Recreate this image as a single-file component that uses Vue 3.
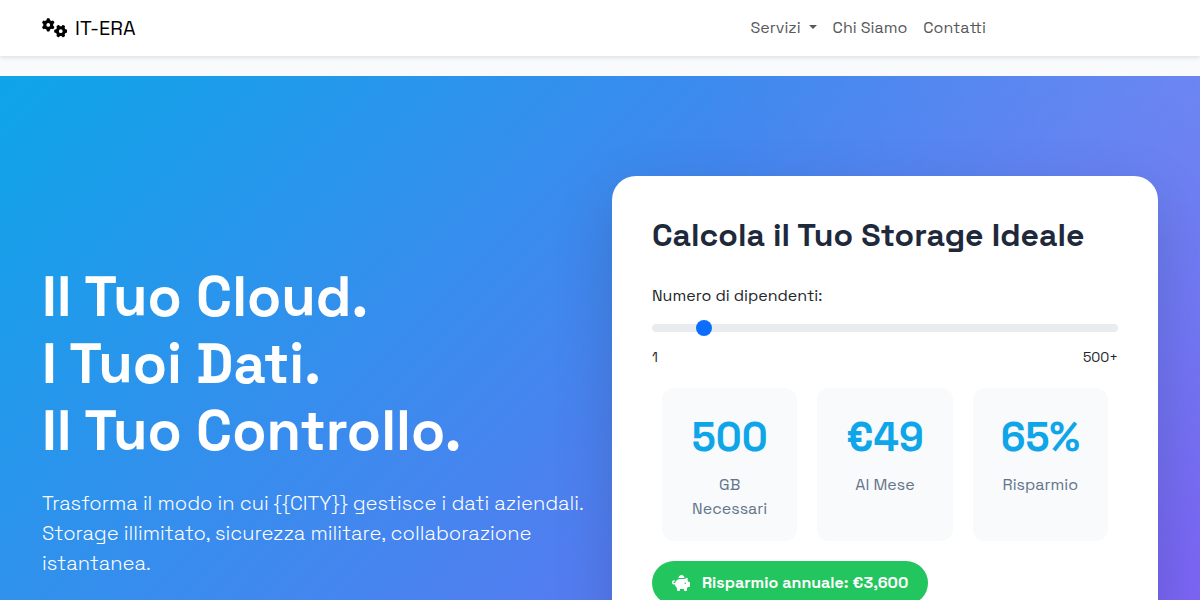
<script setup>
import { ref } from 'vue'

const employees = ref(50)
const city = '{{CITY}}'
const stats = [
  { value: '500', label: 'GB Necessari' },
  { value: '€49', label: 'Al Mese' },
  { value: '65%', label: 'Risparmio' }
]
const gear = 'M308.5 135.3c7.1-6.3 9.9-16.2 6.2-25c-2.3-5.3-4.8-10.5-7.6-15.5L304 89.4c-3-5-6.3-9.9-9.8-14.6c-5.7-7.6-15.7-10.1-24.7-7.1l-28.2 9.3c-10.7-8.8-23-16-36.2-20.9L199 27.1c-1.9-9.3-9.1-16.7-18.5-17.8C173.9 8.4 167.2 8 160.4 8h-.7c-6.8 0-13.5 .4-20.1 1.2c-9.4 1.1-16.6 8.6-18.5 17.8L115 56.1c-13.3 5-25.5 12.1-36.2 20.9L50.5 67.8c-9-3-19-.5-24.7 7.1c-3.5 4.7-6.8 9.6-9.9 14.6l-3 5.3c-2.8 5-5.3 10.2-7.6 15.6c-3.7 8.7-.9 18.6 6.2 25l22.2 19.8C32.6 161.9 32 168.9 32 176s.6 14.1 1.7 20.9L11.5 216.7c-7.1 6.3-9.9 16.2-6.2 25c2.3 5.3 4.8 10.5 7.6 15.6l3 5.2c3 5.1 6.3 9.9 9.9 14.6c5.7 7.6 15.7 10.1 24.7 7.1l28.2-9.3c10.7 8.8 23 16 36.2 20.9l6.1 29.1c1.9 9.3 9.1 16.7 18.5 17.8c6.7 .8 13.5 1.2 20.4 1.2s13.7-.4 20.4-1.2c9.4-1.1 16.6-8.6 18.5-17.8l6.1-29.1c13.3-5 25.5-12.1 36.2-20.9l28.2 9.3c9 3 19 .5 24.7-7.1c3.5-4.7 6.8-9.5 9.8-14.6l3.1-5.4c2.8-5 5.3-10.2 7.6-15.5c3.7-8.7 .9-18.6-6.2-25l-22.2-19.8c1.1-6.8 1.7-13.8 1.7-20.9s-.6-14.1-1.7-20.9l22.2-19.8zM112 176a48 48 0 1 1 96 0 48 48 0 1 1-96 0z'
</script>

<template>
  <div class="page">
    <header class="navbar">
      <div class="container bar">
        <a class="brand" href="#">
          <svg class="gears" viewBox="0 0 640 512" aria-hidden="true">
            <path :d="gear" />
            <path :d="gear" transform="translate(480 336) rotate(90) translate(-160 -176)" />
          </svg>
          <span>IT-ERA</span>
        </a>
        <nav class="links">
          <a class="dropdown" href="#servizi">Servizi</a>
          <a href="#chi-siamo">Chi Siamo</a>
          <a href="#contatti">Contatti</a>
        </nav>
      </div>
    </header>

    <main class="hero">
      <div class="container columns">
        <section class="intro">
          <h1>Il Tuo Cloud.<br>I Tuoi Dati.<br>Il Tuo Controllo.</h1>
          <p>Trasforma il modo in cui {{ city }} gestisce i dati aziendali. Storage illimitato, sicurezza militare, collaborazione istantanea.</p>
        </section>

        <section class="card">
          <h2>Calcola il Tuo Storage Ideale</h2>
          <label for="employees">Numero di dipendenti:</label>
          <input id="employees" v-model.number="employees" class="range" type="range" min="1" max="500">
          <div class="limits"><span>1</span><span>500+</span></div>
          <div class="stats">
            <div v-for="s in stats" :key="s.label" class="stat">
              <div class="value">{{ s.value }}</div>
              <div class="caption">{{ s.label }}</div>
            </div>
          </div>
          <div class="badge">
            <svg class="piggy" viewBox="0 0 576 512" aria-hidden="true">
              <path d="M400 96l0 .7c-5.3-.4-10.6-.7-16-.7H256c-16.5 0-32.5 2.1-47.8 6c-.1-2-.2-4-.2-6c0-53 43-96 96-96s96 43 96 96zm-16 32c3.5 0 7 .1 10.4 .3c4.2 .3 8.4 .7 12.6 1.3C424.6 109.1 450.8 96 480 96h11.5c10.4 0 18 9.8 15.5 19.9l-13.8 55.2c15.8 14.8 28.7 32.8 37.5 52.9H544c17.7 0 32 14.3 32 32v96c0 17.7-14.3 32-32 32H512c-9.1 12.1-19.9 22.9-32 32v64c0 17.7-14.3 32-32 32H416c-17.7 0-32-14.3-32-32V448H256v32c0 17.7-14.3 32-32 32H192c-17.7 0-32-14.3-32-32V416c-34.9-26.2-58.7-66.3-63.2-112H68c-37.6 0-68-30.4-68-68s30.4-68 68-68h4c13.3 0 24 10.7 24 24s-10.7 24-24 24H68c-11 0-20 9-20 20s9 20 20 20H99.2c12.1-59.8 57.7-107.5 116.3-122.8c12.9-3.4 26.5-5.2 40.5-5.2H384zm64 136a24 24 0 1 0 -48 0 24 24 0 1 0 48 0z" />
            </svg>
            <span>Risparmio annuale: €3,600</span>
          </div>
        </section>
      </div>
    </main>
  </div>
</template>

<style>
body {
  margin: 0;
  background: #f8fafc;
}
</style>

<style scoped>
.page,
.page * {
  box-sizing: border-box;
}
.page {
  font-family: "Space Grotesk", Inter, "Liberation Sans", sans-serif;
  font-size: 16px;
  line-height: 24px;
  color: #212529;
}
.container {
  width: 100%;
  max-width: 1140px;
  margin: 0 auto;
  padding: 0 12px;
}
.navbar {
  position: relative;
  background: #fff;
  box-shadow: 0 2px 4px rgba(0, 0, 0, 0.1);
}
.bar {
  display: flex;
  align-items: center;
  justify-content: space-between;
  height: 56px;
}
.brand {
  display: flex;
  align-items: center;
  gap: 8px;
  font-size: 20px;
  line-height: 30px;
  color: #000;
  text-decoration: none;
}
.gears {
  width: 25px;
  height: 20px;
}
.links {
  display: flex;
  gap: 16px;
  margin-right: 172px;
}
.links a {
  color: #595959;
  text-decoration: none;
}
.dropdown::after {
  content: "";
  display: inline-block;
  margin-left: 8px;
  vertical-align: 4px;
  border: 4px solid transparent;
  border-top-color: currentColor;
  border-bottom: 0;
}
.hero {
  margin-top: 20px;
  padding: 100px 0 190px;
  background:
    radial-gradient(circle 500px at 100% 0, rgba(255, 255, 255, 0.1), transparent),
    linear-gradient(135deg, #0ea5e9 0%, #8b5cf6 100%);
}
.columns {
  display: grid;
  grid-template-columns: 1fr 1fr;
  gap: 24px;
}
.intro {
  padding-top: 87px;
  color: #fff;
}
h1 {
  margin: 0 0 24px;
  font-size: 56px;
  line-height: 67px;
  font-weight: 800;
}
.intro p {
  margin: 0;
  font-size: 20px;
  line-height: 30px;
  font-weight: 300;
}
.card {
  padding: 40px;
  border-radius: 24px;
  background: #fff;
  box-shadow: 0 20px 60px rgba(0, 0, 0, 0.15);
}
h2 {
  margin: 0 0 30px;
  font-size: 32px;
  line-height: 38px;
  font-weight: 700;
  color: #1e293b;
}
label {
  display: block;
  margin-bottom: 8px;
}
.range {
  display: block;
  width: 100%;
  height: 24px;
  margin: 0;
  appearance: none;
  background: transparent;
}
.range::-webkit-slider-runnable-track {
  height: 8px;
  border-radius: 8px;
  background: #e9ecef;
}
.range::-webkit-slider-thumb {
  width: 16px;
  height: 16px;
  margin-top: -4px;
  appearance: none;
  border-radius: 50%;
  background: #0d6efd;
}
.limits {
  display: flex;
  justify-content: space-between;
  margin: 6px 0 20px;
  font-size: 14px;
  line-height: 22px;
}
.stats {
  display: grid;
  grid-template-columns: repeat(3, 1fr);
  gap: 20px;
  padding: 0 10px;
}
.stat {
  padding: 20px;
  border-radius: 12px;
  background: #f8fafc;
  text-align: center;
}
.value {
  margin-bottom: 5px;
  font-size: 40px;
  line-height: 60px;
  font-weight: 700;
  color: #0ea5e9;
}
.caption {
  color: #64748b;
}
.badge {
  display: inline-flex;
  align-items: center;
  gap: 12px;
  margin-top: 20px;
  padding: 10px 20px;
  border-radius: 50px;
  background: #22c55e;
  color: #fff;
  font-weight: 700;
}
.piggy {
  width: 18px;
  height: 16px;
}
svg {
  fill: currentColor;
}
</style>
